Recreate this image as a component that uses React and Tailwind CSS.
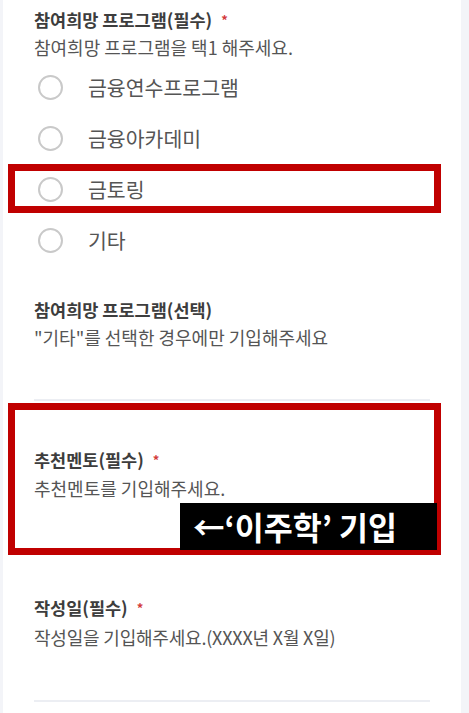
import React from 'react';

const font = { fontFamily: '"Noto Sans CJK KR", "Noto Sans", sans-serif' };

function Title({ children, required }) {
  return (
    <div className="flex items-start leading-[24px] text-[17.5px] font-bold text-[#3d3d3d]">
      <span>{children}</span>
      {required && <span className="ml-[9px] text-[13px] leading-[24px] text-[#d33b3b]">*</span>}
    </div>
  );
}

function Radio({ label }) {
  return (
    <div className="flex items-center h-[51px]">
      <span className="ml-[4px] w-[25px] h-[25px] rounded-full border-2 border-[#c9c9c9] bg-white" />
      <span className="ml-[25px] text-[20.5px] text-[#555]">{label}</span>
    </div>
  );
}

export default function App() {
  const options = ['금융연수프로그램', '금융아카데미', '금토링', '기타'];

  return (
    <div className="min-h-screen bg-[#f3f4f8]" style={font}>
      <div className="relative ml-[3px] w-[458px] h-[713px] bg-white overflow-hidden">
        <div className="px-[31px]">
          {/* 참여희망 프로그램(필수) */}
          <div className="pt-[8px]">
            <Title required>참여희망 프로그램(필수)</Title>
            <p className="mt-[3px] leading-[24px] text-[18px] text-[#555]">참여희망 프로그램을 택1 해주세요.</p>
            <div className="mt-[3px]">
              {options.map((o) => (
                <Radio key={o} label={o} />
              ))}
            </div>
          </div>

          {/* 참여희망 프로그램(선택) */}
          <div className="pt-[32px]">
            <Title>참여희망 프로그램(선택)</Title>
            <p className="mt-[3px] leading-[24px] text-[18px] text-[#555]">"기타"를 선택한 경우에만 기입해주세요</p>
            <div className="mt-[50px] h-[2px] bg-[#eceef3]" />
          </div>

          {/* 추천멘토(필수) */}
          <div className="pt-[47px]">
            <Title required>추천멘토(필수)</Title>
            <p className="mt-[4px] leading-[24px] text-[18px] text-[#555]">추천멘토를 기입해주세요.</p>
            <div className="mt-[50px] h-[2px] bg-[#eceef3]" />
          </div>

          {/* 작성일(필수) */}
          <div className="pt-[44px]">
            <Title required>작성일(필수)</Title>
            <p className="mt-[5px] leading-[24px] text-[18px] tracking-[-0.2px] text-[#555]">작성일을 기입해주세요.(XXXX년 X월 X일)</p>
            <div className="mt-[51px] h-[2px] bg-[#eceef3]" />
          </div>
        </div>

        {/* annotations */}
        <div className="absolute left-[5px] top-[164px] w-[433px] h-[49px] border-[7px] border-[#c00000]" />
        <div className="absolute left-[5px] top-[403px] w-[433px] h-[152px] border-[7px] border-[#c00000]" />
        <div className="absolute left-[177px] top-[503px] w-[257px] h-[47px] bg-black flex items-center pl-[13px] text-white text-[31.5px] font-bold leading-none">
          ←‘이주학’ 기입
        </div>
      </div>
    </div>
  );
}
